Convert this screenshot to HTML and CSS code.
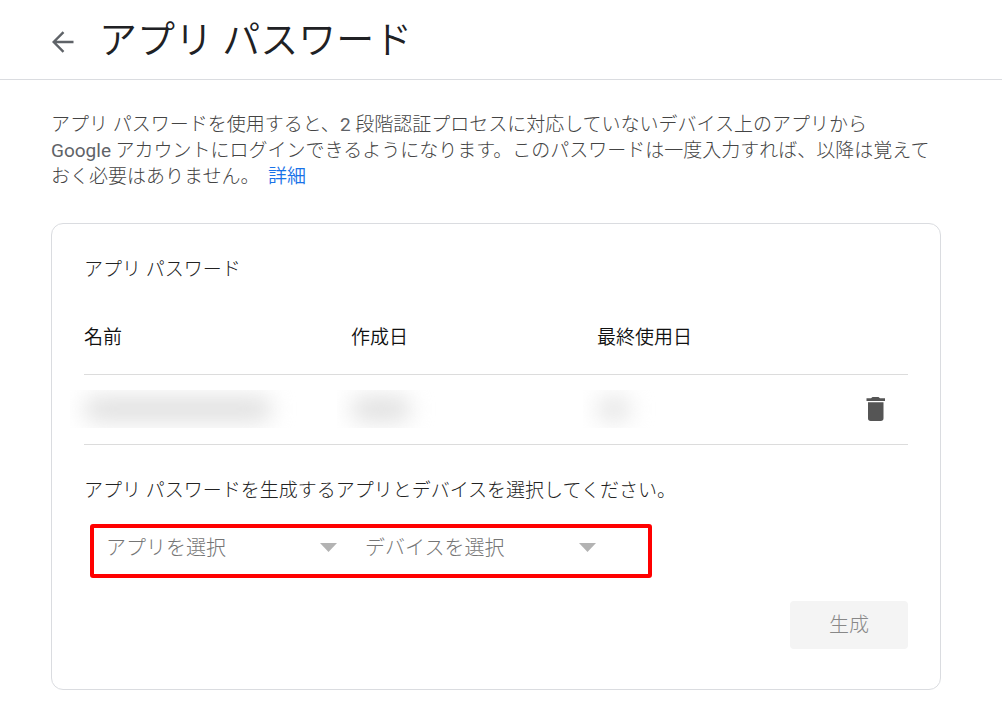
FILE: index.html
```html
<!DOCTYPE html>
<html lang="ja">
<head>
<meta charset="utf-8">
<meta name="viewport" content="width=device-width, initial-scale=1">
<title>アプリ パスワード</title>
<link rel="stylesheet" href="styles.css">
</head>
<body>
<header class="page-header">
  <a class="back" href="#" aria-label="戻る">
    <svg width="22" height="22" viewBox="0 0 22 22" fill="none" stroke="currentColor" stroke-width="2.4" aria-hidden="true"><path d="M21.500 11H2M11.500 1.200L1.700 11l9.800 9.800"/></svg>
  </a>
  <h1 class="title">アプリ パスワード</h1>
</header>
<main class="content">
  <p class="intro">アプリ パスワードを使用すると、<span class="latin">2</span> 段階認証プロセスに対応していないデバイス上のアプリから<br><span class="latin">Google</span> アカウントにログインできるようになります。このパスワードは一度入力すれば、以降は覚えて<br>おく必要はありません。 <a class="link" href="#">詳細</a></p>
  <section class="card">
    <h2 class="card-title">アプリ パスワード</h2>
    <table class="passwords">
      <thead>
        <tr><th class="col-name">名前</th><th class="col-created">作成日</th><th class="col-used">最終使用日</th><th class="col-action"></th></tr>
      </thead>
      <tbody>
        <tr>
          <td><div class="redacted"><span class="smudge smudge-name"></span></div></td>
          <td><div class="redacted"><span class="smudge smudge-created"></span></div></td>
          <td><div class="redacted"><span class="smudge smudge-used"></span></div></td>
          <td class="action"><button class="delete" type="button" aria-label="削除"><svg width="20" height="24" viewBox="0 0 20 24" fill="currentColor" aria-hidden="true"><path d="M6.500 0h6l1.500 1.300h5V4H.5V1.300H5zM2 5.300h15.500v16q0 2.700-2.700 2.700H4.700Q2 24 2 21.300z"/></svg></button></td>
        </tr>
      </tbody>
    </table>
    <form class="generator">
      <p class="prompt">アプリ パスワードを生成するアプリとデバイスを選択してください。</p>
      <div class="pickers">
        <div class="picker">
          <select class="select" aria-label="アプリを選択"><option>アプリを選択</option></select>
          <svg class="caret" width="17" height="9" viewBox="0 0 17 9" fill="currentColor" aria-hidden="true"><path d="M0 0h17L8.500 9z"/></svg>
        </div>
        <div class="picker">
          <select class="select" aria-label="デバイスを選択"><option>デバイスを選択</option></select>
          <svg class="caret" width="17" height="9" viewBox="0 0 17 9" fill="currentColor" aria-hidden="true"><path d="M0 0h17L8.500 9z"/></svg>
        </div>
      </div>
      <button class="generate" type="submit" disabled>生成</button>
    </form>
  </section>
</main>
</body>
</html>
```
FILE: styles.css
```css
* { box-sizing: border-box; }

body {
  margin: 0;
  background: #fff;
  color: #202124;
  font-family: Roboto, "Noto Sans CJK JP", sans-serif;
  font-size: 19px;
  font-weight: 300;
  line-height: 26px;
}

h1, h2, p { margin: 0; font-weight: inherit; }
button, select { font: inherit; border: 0; }

.page-header {
  display: flex;
  align-items: center;
  gap: 25px;
  height: 80px;
  padding: 0 52px;
  border-bottom: 1px solid #dadce0;
}

.back {
  display: flex;
  padding-top: 4px;
  color: #5f6368;
}

.title {
  font-size: 38px;
  font-weight: 350;
  line-height: 48px;
}

.content { padding: 32px 61px 38px 51px; }

.intro {
  margin-bottom: 33px;
  color: #444;
}

.latin {
  color: #5f6368;
  font-weight: 400;
}

.link {
  margin-left: 4px;
  color: #1a73e8;
  font-weight: 350;
  text-decoration: none;
}

.card {
  padding: 33px 32px 40px;
  border: 1px solid #dadce0;
  border-radius: 12px;
}

.card-title {
  font-size: 19px;
  color: #222;
}

.passwords {
  width: 100%;
  margin-top: 20px;
  table-layout: fixed;
  border-collapse: collapse;
}

.passwords th {
  height: 71px;
  padding: 0;
  color: #111;
  font-weight: 350;
  text-align: left;
  border-bottom: 1px solid #dcdcdc;
}

.passwords td {
  height: 70px;
  padding: 0;
  border-bottom: 1px solid #dcdcdc;
}

.col-name { width: 267px; }
.col-created { width: 246px; }
.col-action { width: 65px; }

.redacted {
  display: flex;
  align-items: center;
  height: 38px;
  margin-left: -14px;
  padding-left: 14px;
  overflow: hidden;
}

.smudge {
  height: 24px;
  border-radius: 12px;
  background: #dfdfdf;
  filter: blur(11px);
}

.smudge-name { width: 188px; }
.smudge-created { width: 60px; }
.smudge-used { width: 34px; background: #e4e4e4; }

.action { line-height: 0; }

.delete {
  display: block;
  margin: 0 auto;
  padding: 0;
  background: none;
  color: #555;
}

.generator {
  display: flex;
  flex-direction: column;
  padding-top: 33px;
}

.prompt { color: #222; }

.pickers {
  display: flex;
  gap: 28px;
  align-self: flex-start;
  width: 562px;
  max-width: 100%;
  margin: 20px 0 23px 6px;
  padding: 0 52px 6px 12px;
  border: 4px solid #f00;
  border-radius: 3px;
}

.picker {
  display: grid;
  flex: 1;
  align-items: center;
}

.select {
  grid-area: 1 / 1;
  width: 100%;
  height: 40px;
  padding: 0;
  appearance: none;
  background: none;
  color: #757575;
  font-size: 20px;
}

.caret {
  grid-area: 1 / 1;
  justify-self: end;
  color: #b3b3b3;
  pointer-events: none;
}

.generate {
  align-self: flex-end;
  padding: 11px 39px;
  border-radius: 4px;
  background: #f4f4f4;
  color: #888;
  font-size: 20px;
}
```
